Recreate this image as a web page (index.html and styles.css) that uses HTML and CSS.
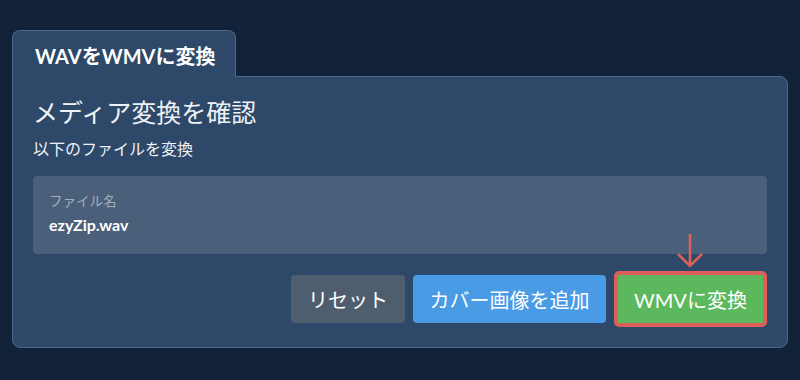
FILE: index.html
```html
<!DOCTYPE html>
<html lang="ja">
<head>
    <meta charset="UTF-8">
    <title>WAVをWMVに変換</title>
    <link rel="stylesheet" href="styles.css">
</head>
<body>
    <div class="converter">
        <div class="tab">WAVをWMVに変換</div>
        <div class="card">
            <h2 class="card-title">メディア変換を確認</h2>
            <p class="card-sub">以下のファイルを変換</p>
            <div class="file-box">
                <div class="file-label">ファイル名</div>
                <div class="file-name">ezyZip.wav</div>
            </div>
            <div class="actions">
                <button class="btn btn-reset">リセット</button>
                <button class="btn btn-cover">カバー画像を追加</button>
                <div class="highlight">
                    <svg class="arrow" width="30" height="36" viewBox="0 0 30 36">
                        <path d="M15 1 V33 M3 21 L15 33 L27 21" fill="none" stroke="#dc5f59" stroke-width="2.6"/>
                    </svg>
                    <button class="btn btn-convert">WMVに変換</button>
                </div>
            </div>
        </div>
    </div>
</body>
</html>
```

FILE: styles.css
```css
:root {
    --page-bg: #112239;
    --panel-bg: #2d4868;
    --panel-border: #4d6685;
    --field-bg: #4a5f79;
    --text-color: #eef2f6;
    --muted: #a3afbd;
    --red: #dc5f59;
}

* {
    margin: 0;
    padding: 0;
    box-sizing: border-box;
}

body {
    font-family: Lato, 'Noto Sans CJK JP', sans-serif;
    background-color: var(--page-bg);
    color: var(--text-color);
    padding: 30px 12px 0;
}

.converter {
    width: 776px;
}

.tab {
    position: relative;
    z-index: 1;
    width: 224px;
    height: 47px;
    margin-bottom: -1px;
    padding: 10px 0 0 22px;
    white-space: nowrap;
    background-color: var(--panel-bg);
    border: 1px solid var(--panel-border);
    border-bottom: none;
    border-radius: 8px 8px 0 0;
    font-size: 20px;
    font-weight: 700;
    color: #fff;
}

.card {
    background-color: var(--panel-bg);
    border: 1px solid var(--panel-border);
    border-radius: 0 8px 8px 8px;
    padding: 20px 20px 20px 20px;
}

.card-title {
    font-size: 25px;
    font-weight: 400;
    line-height: 1.2;
}

.card-sub {
    font-size: 16px;
    margin-top: 9px;
}

.file-box {
    background-color: var(--field-bg);
    border-radius: 4px;
    margin-top: 16px;
    height: 78px;
    padding: 14px 16px;
}

.file-label {
    font-size: 13.5px;
    color: var(--muted);
}

.file-name {
    font-size: 16px;
    font-weight: 700;
    color: #fff;
    margin-top: 5px;
}

.actions {
    display: flex;
    justify-content: flex-end;
    align-items: center;
    gap: 8px;
    margin-top: 17px;
}

.btn {
    font-family: Lato, 'Noto Sans CJK JP', sans-serif;
    font-size: 20px;
    color: #fff;
    border: none;
    border-radius: 4px;
    height: 48px;
    cursor: pointer;
}

.btn-reset {
    background-color: #4f5e6e;
    width: 114px;
}

.btn-cover {
    background-color: #4a9be6;
    width: 193px;
}

.highlight {
    position: relative;
    border: 4px solid var(--red);
    border-radius: 5px;
}

.btn-convert {
    display: block;
    background-color: #5cb85c;
    border-radius: 0;
    width: 145px;
}

.arrow {
    position: absolute;
    left: 57px;
    top: -42px;
}
```
